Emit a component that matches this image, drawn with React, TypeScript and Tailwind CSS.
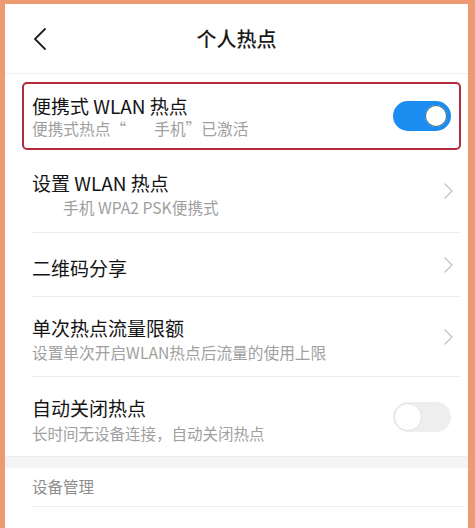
import React from 'react';

const font = { fontFamily: '"Noto Sans CJK SC", "Noto Sans", sans-serif' };

const Chevron = () => (
  <svg width="9" height="16" viewBox="0 0 9 16" fill="none">
    <path d="M1 1l7 7-7 7" stroke="#c4c4c4" strokeWidth="1.4" strokeLinecap="round" strokeLinejoin="round" />
  </svg>
);

const Toggle = ({ on }: { on: boolean }) =>
  on ? (
    <div className="w-[58px] h-[30px] rounded-full bg-[#1b8cf0] flex items-center justify-end pr-[2px]">
      <div className="w-[26px] h-[26px] rounded-full bg-white border-[2px] border-[#1b8cf0] shadow-[inset_0_0_0_1px_#3d6e8a]" />
    </div>
  ) : (
    <div className="w-[58px] h-[30px] rounded-full bg-[#eeeeee] flex items-center pl-[1px]">
      <div className="w-[28px] h-[28px] rounded-full bg-white border border-[#e2e2e2]" />
    </div>
  );

const Row = ({ title, sub, h, right, subIndent }: any) => (
  <div className={`shrink-0 flex items-center justify-between ml-[27px] mr-[8px] border-b border-[#ececec] ${h}`}>
    <div className="flex flex-col pt-[6px]">
      <span className="text-[19px] leading-[26px] text-[#141414]">{title}</span>
      {sub && (
        <span className={`text-[15.7px] leading-[22px] mt-[1px] text-[#a0a0a0] ${subIndent ? 'pl-[31px]' : ''}`}>{sub}</span>
      )}
    </div>
    <div className="pr-[7px] flex items-center">{right}</div>
  </div>
);

export default function App() {
  return (
    <div style={font} className="w-[475px] h-[528px] overflow-hidden bg-[#ec9a72] pl-[5px] pt-[4px] pr-[7px]">
      <div className="bg-white h-full flex flex-col">
        {/* header */}
        <div className="shrink-0 h-[70px] flex items-center border-b border-[#f0f0f0]">
          <div className="pl-[28px]">
            <svg width="14" height="22" viewBox="0 0 14 22" fill="none">
              <path d="M12 1L2 11l10 10" stroke="#222" strokeWidth="1.8" strokeLinecap="round" strokeLinejoin="round" />
            </svg>
          </div>
          <div className="flex-1 text-center text-[20px] font-medium text-[#1a1a1a] pr-[42px]">个人热点</div>
        </div>

        {/* highlighted row */}
        <div className="shrink-0 mt-[8px] ml-[17px] mr-[7px] h-[68px] border-[2px] border-[#b52a3c] rounded-[5px] flex items-center justify-between pl-[8px] pr-[8px]">
          <div className="flex flex-col">
            <span className="text-[19px] leading-[25px] text-[#141414]">便携式 WLAN 热点</span>
            <span className="text-[15.7px] leading-[22px] text-[#a0a0a0] whitespace-pre">便携式热点“        手机”已激活</span>
          </div>
          <Toggle on />
        </div>

        <Row h="h-[83px]" title="设置 WLAN 热点" sub="手机 WPA2 PSK便携式" subIndent right={<Chevron />} />
        <Row h="h-[64px]" title="二维码分享" right={<Chevron />} />
        <Row h="h-[80px]" title="单次热点流量限额" sub="设置单次开启WLAN热点后流量的使用上限" right={<Chevron />} />
        <div className="shrink-0 h-[79px] flex items-center justify-between ml-[27px] mr-[8px]">
          <div className="flex flex-col pt-[6px]">
            <span className="text-[19px] leading-[26px] text-[#141414]">自动关闭热点</span>
            <span className="text-[15.5px] leading-[22px] mt-[1px] text-[#a0a0a0]">长时间无设备连接，自动关闭热点</span>
          </div>
          <div className="pr-[9px]">
            <Toggle on={false} />
          </div>
        </div>

        {/* gap band */}
        <div className="shrink-0 h-[12px] bg-[#f4f4f4] border-t border-[#ececec]" />

        <div className="shrink-0 h-[39px] flex items-center ml-[27px] mr-[3px] border-b border-[#ececec]">
          <span className="text-[15.5px] text-[#8c8c8c]">设备管理</span>
        </div>
        <div className="shrink-0 h-[40px]" />
      </div>
    </div>
  );
}
